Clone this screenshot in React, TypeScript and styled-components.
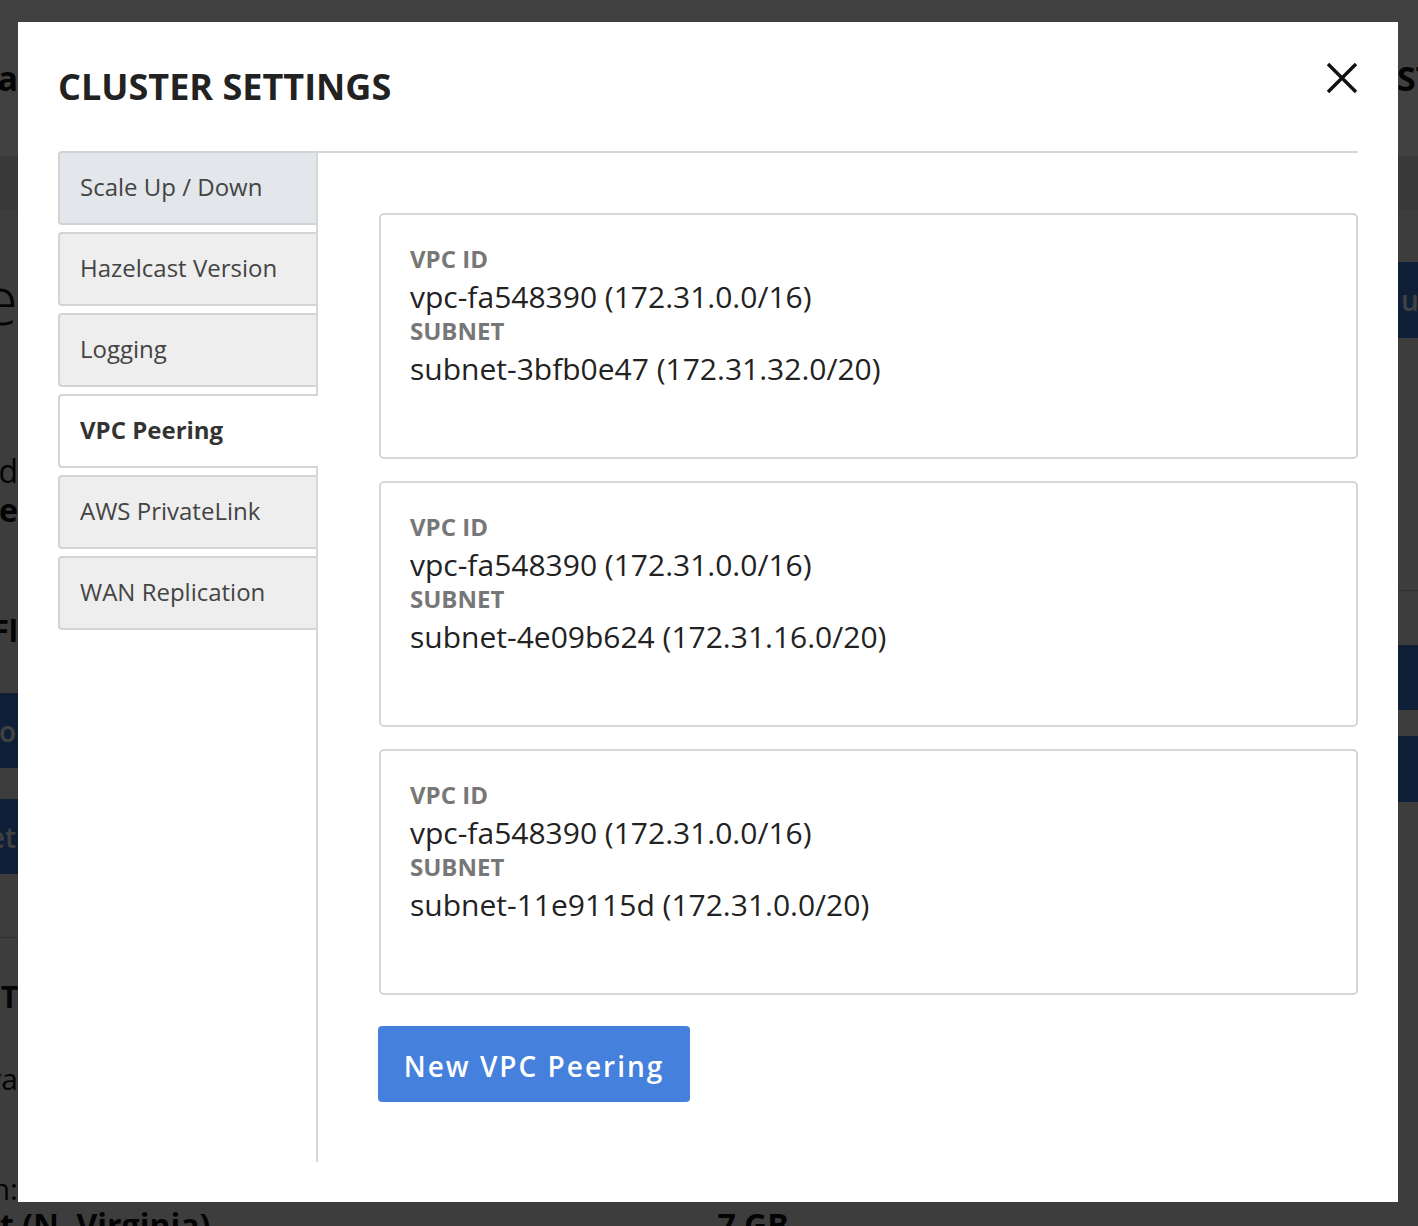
import React from "react";
import styled, { createGlobalStyle, css } from "styled-components";

const GlobalStyle = createGlobalStyle`
  * { box-sizing: border-box; }
  html, body { margin: 0; padding: 0; }
  body {
    font-family: "Open Sans", "Liberation Sans", sans-serif;
    background: #f0f0f0;
    overflow: hidden;
  }
`;

/* ---------- page behind the dialog ---------- */

const BgPage = styled.div`
  width: 1418px;
  height: 1226px;
  overflow: hidden;
  background: #f0f0f0;
  display: flex;
  flex-direction: column;
  color: #111;
`;

const BgHeader = styled.header`
  height: 156px;
  flex-shrink: 0;
  background: #fff;
  display: grid;
  grid-template-columns: 18px 1fr 21px;
  align-items: center;
  font-size: 34px;
  font-weight: 700;
`;

const BgBand = styled.div`
  height: 54px;
  flex-shrink: 0;
  background: #e0e0e0;
`;

const BgBody = styled.div`
  height: 999px;
  flex-shrink: 0;
  display: grid;
  grid-template-columns: 18px 1fr 20px;
`;

const Clip = styled.div<{ $end?: boolean }>`
  overflow: hidden;
  white-space: nowrap;
  display: flex;
  justify-content: ${(p) => (p.$end ? "flex-end" : "flex-start")};
`;

const Rail = styled.div<{ $end?: boolean }>`
  overflow: hidden;
  display: flex;
  flex-direction: column;
  align-items: ${(p) => (p.$end ? "flex-end" : "flex-start")};
`;

const RailText = styled.div<{ $mt: number; $size: number; $weight?: number }>`
  margin-top: ${(p) => p.$mt}px;
  font-size: ${(p) => p.$size}px;
  font-weight: ${(p) => p.$weight ?? 400};
  line-height: 1;
  white-space: nowrap;
  flex-shrink: 0;
`;

const RailBlock = styled.div<{ $mt: number; $h: number }>`
  margin-top: ${(p) => p.$mt}px;
  height: ${(p) => p.$h}px;
  width: 100%;
  flex-shrink: 0;
  background: #3e7bdb;
  color: #fff;
  font-size: 28px;
  font-weight: 600;
  display: flex;
  align-items: center;
  justify-content: flex-end;
  padding-right: 2px;
  white-space: nowrap;
`;

const RightBlock = styled(RailBlock)`
  justify-content: flex-start;
  padding: 0 0 0 3px;
`;

const RailLine = styled.div<{ $mt: number }>`
  margin-top: ${(p) => p.$mt}px;
  height: 1px;
  width: 100%;
  flex-shrink: 0;
  background: #bdbdbd;
`;

const BgFooter = styled.div`
  display: flex;
  align-items: flex-start;
  gap: 507px;
  font-size: 32px;
  font-weight: 700;
  line-height: 1;
  white-space: nowrap;
`;

/* ---------- dialog ---------- */

const Overlay = styled.div`
  position: fixed;
  inset: 0;
  background: rgba(0, 0, 0, 0.745);
  display: flex;
  align-items: flex-start;
  padding: 22px 0 0 18px;
`;

const Modal = styled.div`
  width: 1380px;
  height: 1180px;
  background: #fff;
  padding: 40px;
  display: flex;
  flex-direction: column;
`;

const Header = styled.div`
  height: 89px;
  flex-shrink: 0;
  display: flex;
  justify-content: space-between;
  align-items: flex-start;
`;

const Title = styled.h2`
  margin: 0;
  font-size: 36px;
  line-height: 49px;
  font-weight: 700;
  color: #222;
`;

const CloseButton = styled.button`
  width: 32px;
  height: 32px;
  padding: 0;
  border: 0;
  background: none;
  cursor: pointer;
  display: block;
`;

const Body = styled.div`
  flex: 1;
  display: flex;
  min-height: 0;
`;

const TabList = styled.nav`
  width: 258px;
  flex-shrink: 0;
  display: flex;
  flex-direction: column;
  gap: 7px;
  position: relative;
  z-index: 1;
`;

const Tab = styled.div<{ $active?: boolean; $hover?: boolean }>`
  height: 74px;
  flex-shrink: 0;
  border: 2px solid #d4d4d4;
  border-right: none;
  border-radius: 4px 0 0 4px;
  background: ${(p) => (p.$hover ? "#e3e6ea" : "#eeeeee")};
  padding: 0 0 4px 20px;
  display: flex;
  align-items: center;
  font-size: 24px;
  color: #444;
  white-space: nowrap;
  ${(p) =>
    p.$active &&
    css`
      background: #fff;
      font-weight: 700;
      color: #333;
      margin-right: -2px;
    `}
`;

const Content = styled.section`
  flex: 1;
  border-left: 2px solid #d6d6d6;
  border-top: 2px solid #d6d6d6;
  padding: 60px 0 0 61px;
  display: flex;
  flex-direction: column;
  align-items: flex-start;
`;

const CardStack = styled.div`
  align-self: stretch;
  display: flex;
  flex-direction: column;
  gap: 22px;
`;

const Card = styled.div`
  height: 246px;
  border: 2px solid #d6d6d6;
  border-radius: 5px;
  padding: 28px 29px;
`;

const Label = styled.div`
  font-size: 24px;
  line-height: 32px;
  font-weight: 700;
  color: #777;
`;

const Value = styled.div`
  font-size: 30px;
  line-height: 40px;
  margin: 2px 0 -2px;
  color: #222;
`;

const PrimaryButton = styled.button`
  margin: 31px 0 0 -1px;
  width: 312px;
  height: 76px;
  padding: 3px 0 0;
  border: 0;
  border-radius: 4px;
  background: #4480dc;
  color: #fff;
  font-family: "Open Sans", "Liberation Sans", sans-serif;
  font-size: 28px;
  font-weight: 600;
  letter-spacing: 2px;
  display: flex;
  align-items: center;
  justify-content: center;
  cursor: pointer;
`;

const tabs = [
  "Scale Up / Down",
  "Hazelcast Version",
  "Logging",
  "VPC Peering",
  "AWS PrivateLink",
  "WAN Replication",
];

const peerings = [
  { vpc: "vpc-fa548390 (172.31.0.0/16)", subnet: "subnet-3bfb0e47 (172.31.32.0/20)" },
  { vpc: "vpc-fa548390 (172.31.0.0/16)", subnet: "subnet-4e09b624 (172.31.16.0/20)" },
  { vpc: "vpc-fa548390 (172.31.0.0/16)", subnet: "subnet-11e9115d (172.31.0.0/20)" },
];

export default function App() {
  return (
    <>
      <GlobalStyle />
      <BgPage>
        <BgHeader>
          <Clip $end>Data</Clip>
          <div />
          <Clip>STATUS</Clip>
        </BgHeader>
        <BgBand />
        <BgBody>
          <Rail $end>
            <RailText $mt={55} $size={68} $weight={300}>Cloud Pipe</RailText>
            <RailText $mt={122} $size={32}>Ad</RailText>
            <RailText $mt={7} $size={32} $weight={700}>Name</RailText>
            <RailText $mt={90} $size={30} $weight={700}>Fl</RailText>
            <RailBlock $mt={47} $h={75}>Go</RailBlock>
            <RailBlock $mt={31} $h={75}>Set</RailBlock>
            <RailLine $mt={63} />
            <RailText $mt={44} $size={30} $weight={700}>T</RailText>
            <RailText $mt={52} $size={30}>Ava</RailText>
            <RailText $mt={80} $size={30}>Region:</RailText>
          </Rail>
          <div />
          <Rail>
            <RightBlock $mt={52} $h={76}>ups</RightBlock>
            <RailLine $mt={252} />
            <RightBlock $mt={54} $h={65} />
            <RightBlock $mt={26} $h={66} />
          </Rail>
        </BgBody>
        <BgFooter>
          <span>t (N. Virginia)</span>
          <span>7 GB</span>
        </BgFooter>
      </BgPage>

      <Overlay>
        <Modal role="dialog" aria-label="Cluster Settings">
          <Header>
            <Title>CLUSTER SETTINGS</Title>
            <CloseButton aria-label="Close">
              <svg width="32" height="32" viewBox="0 0 32 32">
                <path d="M2 2 L30 30 M30 2 L2 30" stroke="#111" strokeWidth="3.4" fill="none" />
              </svg>
            </CloseButton>
          </Header>
          <Body>
            <TabList>
              {tabs.map((t, i) => (
                <Tab key={t} $active={t === "VPC Peering"} $hover={i === 0}>
                  {t}
                </Tab>
              ))}
            </TabList>
            <Content>
              <CardStack>
                {peerings.map((p, i) => (
                  <Card key={i}>
                    <Label>VPC ID</Label>
                    <Value>{p.vpc}</Value>
                    <Label>SUBNET</Label>
                    <Value>{p.subnet}</Value>
                  </Card>
                ))}
              </CardStack>
              <PrimaryButton>New VPC Peering</PrimaryButton>
            </Content>
          </Body>
        </Modal>
      </Overlay>
    </>
  );
}
